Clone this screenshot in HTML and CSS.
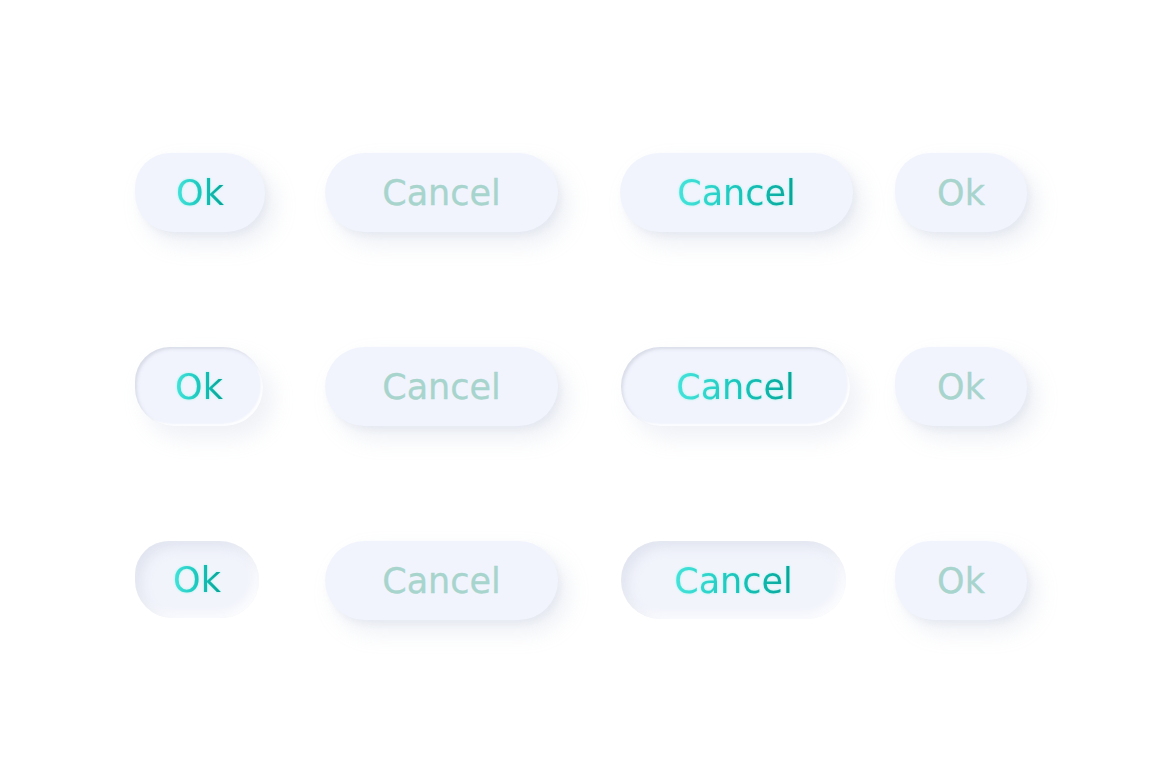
FILE: index.html
```html
<!DOCTYPE html>
<html>
<head>
<meta charset="utf-8">
<link rel="stylesheet" href="styles.css">
</head>
<body>
<main class="board">
  <div class="row">
    <div class="cell w-ok"><button class="btn flat ok"><span class="lbl on">Ok</span></button></div>
    <div class="cell w-c1"><button class="btn flat cancel"><span class="lbl off">Cancel</span></button></div>
    <div class="cell w-c2"><button class="btn flat cancel"><span class="lbl on">Cancel</span></button></div>
    <div class="cell"><button class="btn flat ok2"><span class="lbl off">Ok</span></button></div>
  </div>
  <div class="row">
    <div class="cell w-ok"><button class="btn rim ok ok-b"><span class="lbl on">Ok</span></button></div>
    <div class="cell w-c1"><button class="btn flat cancel"><span class="lbl off">Cancel</span></button></div>
    <div class="cell w-c2"><button class="btn rim cancel cancel-b"><span class="lbl on">Cancel</span></button></div>
    <div class="cell"><button class="btn flat ok2"><span class="lbl off">Ok</span></button></div>
  </div>
  <div class="row">
    <div class="cell w-ok"><button class="btn pressed ok ok-c"><span class="lbl on">Ok</span></button></div>
    <div class="cell w-c1"><button class="btn flat cancel"><span class="lbl off">Cancel</span></button></div>
    <div class="cell w-c2"><button class="btn pressed cancel cancel-c"><span class="lbl on">Cancel</span></button></div>
    <div class="cell"><button class="btn flat ok2"><span class="lbl off">Ok</span></button></div>
  </div>
</main>
</body>
</html>
```

FILE: styles.css
```css
html, body {
  margin: 0;
  padding: 0;
  background: #ffffff;
}

.board {
  width: 1160px;
  height: 772px;
  box-sizing: border-box;
  padding: 153px 0 0 135px;
  display: flex;
  flex-direction: column;
  gap: 115px;
}

.row {
  display: flex;
  align-items: flex-start;
  height: 79px;
}

.cell { display: flex; }
.w-ok { width: 190px; }
.w-c1 { width: 295px; }
.w-c2 { width: 275px; }

.btn {
  border: none;
  padding: 0;
  margin: 0;
  height: 79px;
  border-radius: 40px;
  background: #f1f4fd;
  display: flex;
  align-items: center;
  justify-content: center;
  font-family: "DejaVu Sans", "Noto Sans", sans-serif;
  font-size: 35px;
  letter-spacing: 0;
  font-weight: 400;
}

.ok { width: 130px; border-radius: 36px 42px 40px 40px; }
.ok2 { width: 132px; border-radius: 36px 42px 40px 40px; }
.cancel { width: 233px; }
.ok-b { width: 128px; }
.ok-c { width: 124px; height: 77px; }
.cancel-b { width: 229px; margin-left: 1px; }
.cancel-c { width: 225px; height: 78px; margin-left: 1px; }

.flat {
  box-shadow: 10px 12px 22px rgba(175, 185, 210, 0.22), 3px 4px 6px rgba(195, 202, 222, 0.18);
}

.rim {
  box-shadow:
    inset 2px 2px 3px rgba(195, 200, 212, 0.5),
    inset -2px -2px 2px rgba(255, 255, 255, 0.9),
    10px 12px 22px rgba(175, 185, 210, 0.2);
}

.pressed {
  background: #f2f4fc;
  box-shadow:
    inset 6px 6px 12px rgba(205, 210, 224, 0.45),
    inset -4px -4px 10px rgba(255, 255, 255, 0.9);
}

.lbl {
  display: inline-block;
  line-height: 1;
  padding-top: 2px;
}

.lbl.off {
  color: #a7d4cc;
  -webkit-text-stroke: 0.3px #a7d4cc;
}

.lbl.on {
  background: linear-gradient(90deg, #45e4dc 0%, #19c4bb 55%, #06a498 100%);
  -webkit-background-clip: text;
  background-clip: text;
  color: transparent;
  filter: drop-shadow(0 0 0.8px #c4f4ee) drop-shadow(0 0 0.6px #c4f4ee);
}
```
